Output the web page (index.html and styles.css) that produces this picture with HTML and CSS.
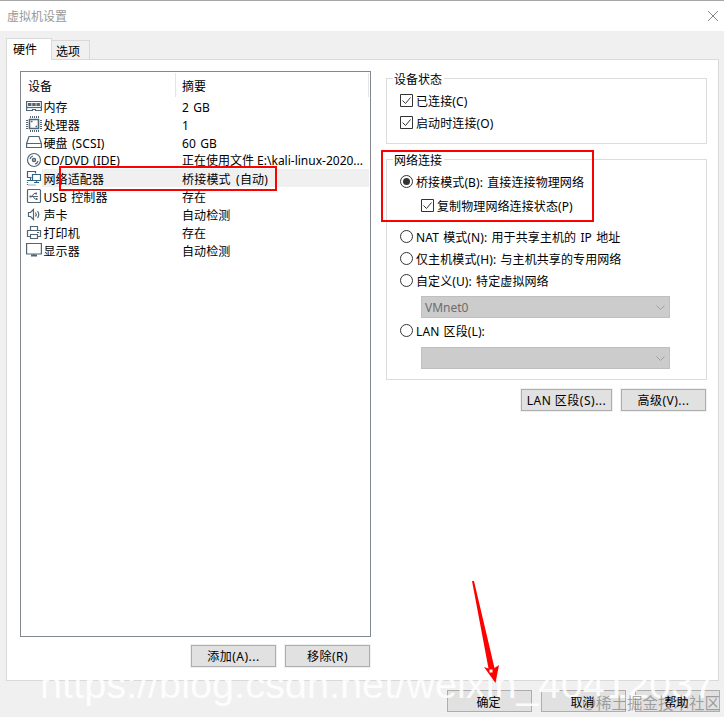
FILE: index.html
```html
<!DOCTYPE html>
<html lang="zh-CN">
<head>
<meta charset="utf-8">
<title>虚拟机设置</title>
<link rel="stylesheet" href="styles.css">
</head>
<body>
<div class="window">
  <header class="titlebar">
    <span>虚拟机设置</span>
    <svg class="close" width="12" height="12" viewBox="0 0 12 12"><path d="M1 1L11 11M11 1L1 11"/></svg>
  </header>
  <nav class="tabs">
    <div class="tab active">硬件</div>
    <div class="tab">选项</div>
  </nav>
  <main class="panel">
    <section class="hardware">
      <div class="list">
        <div class="head"><span class="device">设备</span><span class="summary">摘要</span></div>
        <div class="row">
          <svg class="icon" viewBox="0 0 16 18"><path d="M.6 4.500h14.800v9H9.500v-1h-3v1H.6z"/><path d="M2 7.500h12" stroke-width="3" stroke-dasharray="3.500 .7"/><path d="M1 10.500h14"/></svg>
          <span class="name">内存</span><span class="value">2 GB</span></div>
        <div class="row">
          <svg class="icon" viewBox="0 0 16 18"><path d="M3.500 4.500h9v9h-9z" stroke-width="1.600"/><path d="M4.500 1v2M6.500 1v2M8.500 1v2M10.500 1v2M12.500 1v2M4.500 15v2M6.500 15v2M8.500 15v2M10.500 15v2M12.500 15v2M0 5.500h2M0 7.500h2M0 9.500h2M0 11.500h2M0 13.500h2M14 5.500h2M14 7.500h2M14 9.500h2M14 11.500h2M14 13.500h2" stroke-width="1"/><path d="M5 6.500h1.500M9.500 11.500H11" stroke-width="1.500"/></svg>
          <span class="name">处理器</span><span class="value">1</span></div>
        <div class="row">
          <svg class="icon" viewBox="0 0 16 18"><path d="M.6 10.500L3 3.500h10l2.400 7v4H.6zM.6 10.500h15"/></svg>
          <span class="name">硬盘 (SCSI)</span><span class="value">60 GB</span></div>
        <div class="row">
          <svg class="icon" viewBox="0 0 16 18"><circle cx="8" cy="9" r="6.500"/><circle cx="8" cy="9" r="1.500" stroke-width="1.600"/><path d="M4 8a4 4 0 0 1 3-3M12 10a4 4 0 0 1-3 3"/></svg>
          <span class="name tight">CD/DVD (IDE)</span><span class="value tight">正在使用文件 E:\kali-linux-2020...</span></div>
        <div class="row selected">
          <svg class="icon blue" viewBox="0 0 16 18"><path d="M5.500 8.500h-4v-6h8v2M6.500 5.500h8v6h-8zM10.500 11.500v2M8 13.500h5M4.500 9v2M2 11.500h4"/><path d="M1.500 11v5h9" stroke-dasharray="1 1"/></svg>
          <span class="name">网络适配器</span><span class="value">桥接模式 (自动)</span></div>
        <div class="row">
          <svg class="icon" viewBox="0 0 16 18"><rect x="1.500" y="2.500" width="13" height="13" rx="1"/><path d="M4 9.500h8M6 9.500l2-3h2M7 9.500l2 2.500h2" stroke-width="1"/><path d="M3.500 9.500h2M9.500 6.500h1.500M10 12h1.500" stroke-width="2"/></svg>
          <span class="name">USB 控制器</span><span class="value">存在</span></div>
        <div class="row">
          <svg class="icon" viewBox="0 0 16 18"><path d="M2.500 7.500h2l3-3v10l-3-3h-2zM9.500 7.500q1.500 2 0 4M11.500 6q2.500 3.500 0 7"/></svg>
          <span class="name">声卡</span><span class="value">自动检测</span></div>
        <div class="row">
          <svg class="icon" viewBox="0 0 16 18"><path d="M4.500 7.500v-4h7v4M4 13.500H1.500v-6h13v6H12M4.500 11.500h7v4h-7zM11 9.500h2"/></svg>
          <span class="name">打印机</span><span class="value">存在</span></div>
        <div class="row">
          <svg class="icon" viewBox="0 0 16 18"><path d="M.6 2.500h14.800v10.500H.6zM8 13v1"/><path d="M5 14.500h6" stroke-width="2"/></svg>
          <span class="name">显示器</span><span class="value">自动检测</span></div>
        <div class="mark mark-adapter"></div>
      </div>
      <div class="buttons"><button>添加(A)...</button><button>移除(R)</button></div>
    </section>
    <section class="settings">
      <div class="group status">
        <span class="legend">设备状态</span>
        <label class="opt"><svg class="box" viewBox="0 0 13 13"><path d="M.5.5h12v12H.5z"/><path d="M2.500 6.500l3 3 5-6"/></svg>已连接(C)</label>
        <label class="opt"><svg class="box" viewBox="0 0 13 13"><path d="M.5.5h12v12H.5z"/><path d="M2.500 6.500l3 3 5-6"/></svg>启动时连接(O)</label>
      </div>
      <div class="group network">
        <span class="legend">网络连接</span>
        <label class="opt"><svg class="box" viewBox="0 0 13 13"><circle cx="6.500" cy="6.500" r="6"/><circle class="dot" cx="6.500" cy="6.500" r="3.500"/></svg>桥接模式(B): 直接连接物理网络</label>
        <label class="opt sub"><svg class="box" viewBox="0 0 13 13"><path d="M.5.5h12v12H.5z"/><path d="M2.500 6.500l3 3 5-6"/></svg>复制物理网络连接状态(P)</label>
        <label class="opt nat"><svg class="box" viewBox="0 0 13 13"><circle cx="6.500" cy="6.500" r="6"/></svg>NAT 模式(N): 用于共享主机的 IP 地址</label>
        <label class="opt"><svg class="box" viewBox="0 0 13 13"><circle cx="6.500" cy="6.500" r="6"/></svg>仅主机模式(H): 与主机共享的专用网络</label>
        <label class="opt"><svg class="box" viewBox="0 0 13 13"><circle cx="6.500" cy="6.500" r="6"/></svg>自定义(U): 特定虚拟网络</label>
        <div class="combo"><span>VMnet0</span><svg width="9" height="6" viewBox="0 0 9 6"><path d="M.5.5l4 4 4-4"/></svg></div>
        <label class="opt lan"><svg class="box" viewBox="0 0 13 13"><circle cx="6.500" cy="6.500" r="6"/></svg>LAN 区段(L):</label>
        <div class="combo second"><span></span><svg width="9" height="6" viewBox="0 0 9 6"><path d="M.5.5l4 4 4-4"/></svg></div>
        <div class="mark mark-network"></div>
      </div>
      <div class="buttons"><button class="wide">LAN 区段(S)...</button><button>高级(V)...</button></div>
    </section>
  </main>
  <footer class="buttons footer"><button><span>确定</span></button><button><span>取消</span></button><button><span>帮助</span></button></footer>
  <div class="watermark url">https://blog.csdn.net/weixin_40412037</div>
  <div class="watermark community">@稀土掘金技术社区</div>
  <svg class="arrow" width="40" height="110" viewBox="0 0 40 110"><path d="M2 1L4 1L24.500 88L29 85L25.500 103L14 87L18.500 88.500Z"/><path class="handle" d="M19 89h4v4h-4z"/></svg>
</div>
</body>
</html>
```
FILE: styles.css
```css
* { box-sizing: border-box; }

body {
  margin: 0;
  font: 12px/18px "Noto Sans", "Noto Sans CJK SC", sans-serif;
  color: #000;
}

.window {
  position: relative;
  width: 724px;
  height: 717px;
  overflow: hidden;
  background: #f0f0f0;
  white-space: nowrap;
}

svg { display: block; flex: none; fill: none; }

.titlebar {
  display: flex;
  align-items: center;
  justify-content: space-between;
  height: 31px;
  padding: 1px 5px 0 7px;
  border-top: 1px solid #a6a6a6;
  background: #fff;
  color: #999;
}
.close { stroke: #888; margin-top: -2px; }

.tabs {
  display: flex;
  align-items: flex-end;
  height: 28px;
  padding-left: 6px;
}
.tab {
  width: 38px;
  height: 19px;
  padding-left: 4px;
  line-height: 22px;
  border: 1px solid #d9d9d9;
  border-width: 1px 1px 0 0;
}
.tab.active {
  z-index: 1;
  width: 46px;
  height: 22px;
  margin-bottom: -1px;
  padding-left: 6px;
  border-left-width: 1px;
  background: #fff;
}

.panel {
  display: flex;
  gap: 15px;
  width: 713px;
  height: 622px;
  margin-left: 6px;
  padding: 11px 0 0 13px;
  border: 1px solid #d9d9d9;
  background: #fff;
}

.hardware { width: 351px; }
.list {
  position: relative;
  height: 566px;
  padding: 1px;
  border: 1px solid #828790;
}
.head { display: flex; height: 24px; padding-left: 6px; line-height: 28px; }
.device { width: 148px; border-right: 1px solid #e5e5e5; }
.summary { flex: 1; padding-left: 6px; border-right: 1px solid #e5e5e5; }
.row {
  display: grid;
  grid-template-columns: 16px 139px 1fr;
  height: 18px;
  padding-left: 4px;
  line-height: 22px;
  word-spacing: 1px;
  letter-spacing: .1px;
}
.icon { width: 16px; height: 18px; stroke: #526575; stroke-width: 1.2; }
.icon.blue { stroke: #2f6484; }
.name { height: 18px; padding-left: 1.5px; }
.value { height: 18px; padding-left: 1px; }
.tight { line-height: 20px; letter-spacing: 0; }
.value.tight { word-spacing: 0; }
.selected .name, .selected .value { background: #f0f0f0; }
.selected .value { word-spacing: 2px; letter-spacing: .2px; }

.buttons { display: flex; justify-content: flex-end; gap: 9px; margin-top: 8px; padding-right: 1px; }
button {
  width: 85px;
  height: 22px;
  padding: 2px 0 0;
  border: 1px solid #adadad;
  outline: 1px solid #f1f1f1;
  background: #e1e1e1;
  color: #000;
  font: inherit;
  line-height: 18px;
  letter-spacing: .5px;
}
.wide { width: 91px; }

.settings { width: 321px; padding-top: 7px; }
.settings .buttons { margin-top: 9px; }
.group { position: relative; border: 1px solid #dcdcdc; }
.status { height: 66px; padding: 11px 0 0 13px; }
.network { height: 221px; margin-top: 15px; padding: 11px 0 0 13px; }
.legend {
  position: absolute;
  top: -8px;
  left: 6px;
  padding: 0 2px 0 1px;
  background: #fff;
}
.opt {
  display: flex;
  align-items: center;
  gap: 3px;
  height: 22px;
  padding-top: 2px;
  word-spacing: 1px;
  letter-spacing: .1px;
}
.box { width: 13px; height: 13px; margin-bottom: 3px; stroke: #333; }
.dot { fill: #333; stroke: none; }
.sub { height: 26px; padding-left: 21px; }
.nat { margin-top: 7px; }
.lan { margin-top: 2px; }
.combo {
  display: flex;
  align-items: center;
  justify-content: space-between;
  width: 249px;
  height: 22px;
  margin: 4px 0 0 21px;
  padding: 1px 4px 0 3px;
  border: 1px solid #bfbfbf;
  background: #ccc;
  color: #6d6d6d;
}
.combo.second { margin-top: 5px; }
.combo svg { stroke: #a0a0a0; }

.footer { margin-top: 9px; padding-right: 4px; }
.footer button { padding: 3px 2px 0 0; line-height: 17px; letter-spacing: 0; }
.footer span { position: relative; z-index: 2; }

.mark { position: absolute; border: 2px solid #f00; }
.mark-adapter { left: 38px; top: 94px; width: 218px; height: 25px; }
.mark-network { left: -6px; top: -10px; width: 213px; height: 72px; }

.watermark { position: absolute; z-index: 1; pointer-events: none; }
.url {
  left: 40px;
  top: 662px;
  font: 39.700px/44px "Liberation Sans", sans-serif;
  color: rgba(255, 255, 255, .88);
}
.community {
  left: 582px;
  top: 692px;
  font-size: 15.500px;
  line-height: 22px;
  color: rgba(110, 110, 110, .6);
}
.arrow { position: absolute; z-index: 2; left: 470px; top: 580px; }
.arrow path { fill: #f00; }
.arrow .handle { fill: #fff; stroke: #f00; }
```
